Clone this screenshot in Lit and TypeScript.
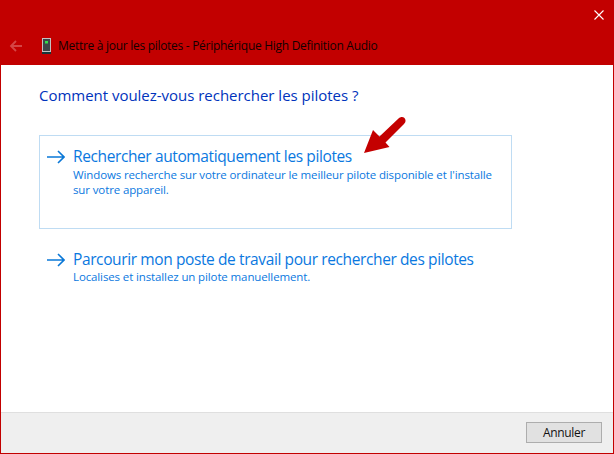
import { LitElement, html, css } from "lit";
import { customElement } from "lit/decorators.js";

const arrow = html`<svg class="go" viewBox="0 0 19 14" width="19" height="14"><path d="M1 7H18M12 1l6 6-6 6" fill="none" stroke="#0a78d7" stroke-width="1.6"/></svg>`;

@customElement("app-root")
export class AppRoot extends LitElement {
  static styles = css`
    :host { display: block; width: 614px; height: 454px; font-family: "Open Sans", "Noto Sans", sans-serif; }
    .win { box-sizing: border-box; width: 614px; height: 454px; display: flex; flex-direction: column; background: #fff; border: 1px solid #c20000; border-top: 0; }
    .head { height: 65px; flex: none; background: #c20000; display: flex; flex-direction: column; }
    .top { height: 31px; display: flex; justify-content: flex-end; align-items: flex-start; padding: 10px 9px 0 0; box-sizing: border-box; }
    .nav { display: flex; align-items: center; height: 29px; padding-left: 8px; }
    .back { margin-right: 18px; }
    .dev { margin-right: 5px; }
    .title { font-size: 12px; letter-spacing: -0.29px; color: #120000; white-space: nowrap; }
    .main { flex: 1; padding: 19px 101px 0 38px; display: flex; flex-direction: column; }
    h1 { margin: 0 0 29px; font-weight: 400; font-size: 15px; line-height: 22px; letter-spacing: -0.02px; color: #0033bc; white-space: nowrap; }
    .opt { display: grid; grid-template-columns: 19px 1fr; align-content: start; column-gap: 8px; padding: 10px 6px 0 6px; box-sizing: border-box; border: 1px solid transparent; width: 473px; }
    .opt.sel { border-color: #bfdcf3; height: 94px; margin-bottom: 9px; }
    .go { margin-top: 4px; }
    .t { font-size: 15.5px; line-height: 20px; letter-spacing: -0.39px; color: #0a78e0; white-space: nowrap; }
    .d { grid-column: 2; font-size: 11.5px; line-height: 15px; letter-spacing: -0.12px; color: #0a78e0; white-space: nowrap; }
    .sel .d { margin-top: 1px; }
    .foot { height: 41px; flex: none; box-sizing: border-box; background: #efefef; border-top: 1px solid #dfdfdf; display: flex; justify-content: flex-end; align-items: flex-start; padding: 9px 11px 0 0; }
    button { width: 76px; height: 21px; box-sizing: border-box; background: #e1e1e1; border: 1px solid #adadad; font: 12px "Open Sans", sans-serif; letter-spacing: -0.3px; color: #111; padding: 0; }
    .pointer { position: absolute; left: 362px; top: 115px; }
  `;

  render() {
    return html`<div class="win">
      <div class="head">
        <div class="top">
          <svg width="10" height="10" viewBox="0 0 10 10"><path d="M.5.5l9 9M9.5.5l-9 9" stroke="#fff" stroke-width="1.1"/></svg>
        </div>
        <div class="nav">
          <svg class="back" width="13" height="12" viewBox="0 0 13 12"><path d="M13 6H2M7 1L2 6l5 5" fill="none" stroke="#d44545" stroke-width="1.8"/></svg>
          <svg class="dev" width="13" height="16" viewBox="0 0 13 16">
            <rect x="2.5" y=".5" width="8" height="13" fill="#3f4448" stroke="#c3c3c3"/>
            <rect x="5" y="3" width="3" height="2.5" fill="#35e04a"/>
            <rect x="2" y="14" width="9" height="2" fill="#16363a"/>
          </svg>
          <span class="title">Mettre à jour les pilotes - Périphérique High Definition Audio</span>
        </div>
      </div>
      <div class="main">
        <h1>Comment voulez-vous rechercher les pilotes ?</h1>
        <div class="opt sel">
          ${arrow}
          <div class="t">Rechercher automatiquement les pilotes</div>
          <div class="d">Windows recherche sur votre ordinateur le meilleur pilote disponible et l'installe<br />sur votre appareil.</div>
        </div>
        <div class="opt">
          ${arrow}
          <div class="t">Parcourir mon poste de travail pour rechercher des pilotes</div>
          <div class="d">Localises et installez un pilote manuellement.</div>
        </div>
      </div>
      <div class="foot"><button>Annuler</button></div>
    </div>
    <svg class="pointer" width="46" height="42" viewBox="0 0 46 42">
      <path d="M2 38L11 15 17.5 21.5 36.5 3.5C38.5 1.5 41 1.5 42.5 3 44 4.8 44 7 42 9L23.5 27.5 27.5 32Z" fill="#c40000"/>
    </svg>`;
  }
}
